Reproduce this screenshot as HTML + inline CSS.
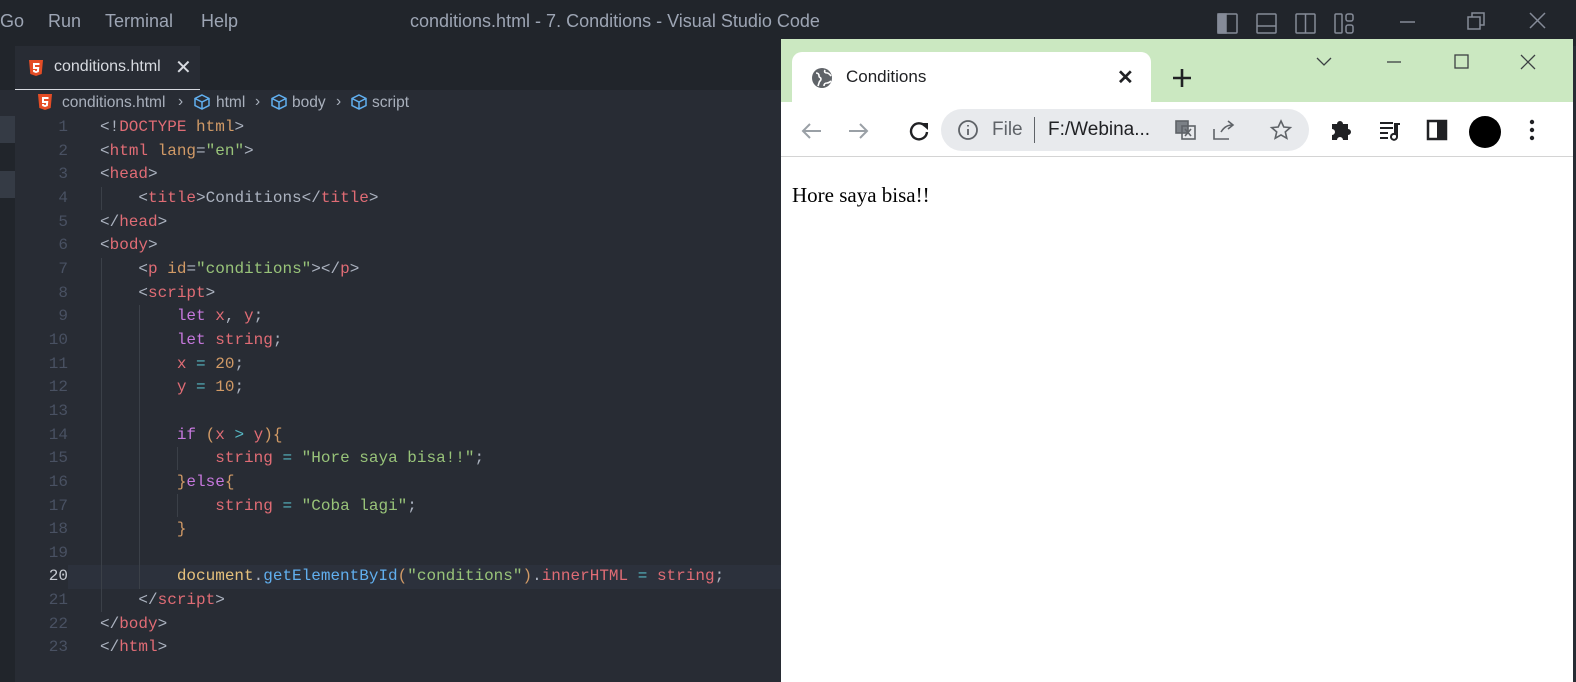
<!DOCTYPE html>
<html style="width:1576px;height:682px;overflow:hidden"><head><style>
*{margin:0;padding:0;box-sizing:border-box}
body{width:1576px;height:682px;background:#282c34;position:relative;overflow:hidden;font-family:"Liberation Sans",sans-serif}
.abs{position:absolute}
#title{left:0;top:0;width:1576px;height:46px;background:#21252b;color:#9da5b4;font-size:18px}
#title span{position:absolute;top:11px}
#tabs{left:0;top:46px;width:782px;height:44px;background:#21252b}
#tab{left:15px;top:46px;width:185px;height:44px;background:#282c34;border-bottom:1px solid #d7dae0;color:#d7dae0;font-size:16px}
#code{left:0;top:116px;width:782px;height:560px;font-family:"Liberation Mono",monospace;font-size:16px;line-height:23.65px;color:#abb2bf}
.pre{white-space:pre}
.ln{position:absolute;left:20px;top:0;width:48px;text-align:right;color:#495162}
.t{color:#e06c75}.a{color:#d19a66}.s{color:#98c379}.k{color:#c678dd}.f{color:#61afef}.y{color:#e5c07b}.p{color:#abb2bf}.c{color:#56b6c2}
.g{position:absolute;width:1px;background:#3b4048}
</style></head><body>
<div id="title" class="abs">
<span style="left:0">Go</span><span style="left:48px">Run</span><span style="left:105px">Terminal</span><span style="left:201px">Help</span>
<span style="left:410px">conditions.html - 7. Conditions - Visual Studio Code</span>
<svg class="abs" style="left:1210px;top:8px" width="366" height="30" fill="none" stroke="#858b98" stroke-width="1.5">
<rect x="8" y="6" width="19" height="19" rx="1"/><rect x="8" y="6" width="8" height="19" fill="#858b98"/>
<rect x="47" y="6" width="19" height="19" rx="1"/><line x1="47" y1="18" x2="66" y2="18"/>
<rect x="86" y="6" width="19" height="19" rx="1"/><line x1="95.5" y1="6" x2="95.5" y2="25"/>
<rect x="125" y="6" width="7" height="19" rx="1"/><rect x="136" y="6" width="7" height="7" rx="2"/><rect x="136" y="17" width="7" height="8" rx="2"/>
<line x1="190" y1="14" x2="205" y2="14"/>
<rect x="258" y="9" width="12" height="12"/><path d="M262 9V5h12v12h-4"/>
<path d="M320 5l15 15M335 5l-15 15"/>
</svg>
</div>
<div id="tabs" class="abs"></div>
<div id="tab" class="abs">
<svg class="abs" style="left:14px;top:14px" width="14" height="16"><path d="M0 0h14l-1.3 14L7 16 1.3 14z" fill="#e44d26"/><path d="M4 3h6.5v2H6v2h4.3l-.5 5L7 13l-2.8-1-.2-2h2l.1.8L7 11l1-.3.1-1.7H4z" fill="#fff"/></svg>
<span class="abs" style="left:39px;top:12px">conditions.html</span>
<span class="abs" style="left:160px;top:9px;font-size:20px">✕</span>
</div>
<div class="abs" style="left:0;top:90px;width:782px;height:26px;color:#a9b0bc;font-size:15.5px">
<svg class="abs" style="left:38px;top:4px" width="14" height="16"><path d="M0 0h14l-1.3 14L7 16 1.3 14z" fill="#e44d26"/><path d="M4 3h6.5v2H6v2h4.3l-.5 5L7 13l-2.8-1-.2-2h2l.1.8L7 11l1-.3.1-1.7H4z" fill="#fff"/></svg>
<span class="abs" style="left:62px;top:4px">conditions.html</span>
<span class="abs" style="left:178px;top:3px">›</span>
<svg class="abs" style="left:193px;top:4px" width="18" height="16" fill="none" stroke="#61afef" stroke-width="1.5"><path d="M9 1l7 3.5v7L9 15 2 11.5v-7zM2 4.5L9 8l7-3.5M9 8v7"/></svg>
<span class="abs" style="left:216px;top:4px">html</span>
<span class="abs" style="left:255px;top:3px">›</span>
<svg class="abs" style="left:270px;top:4px" width="18" height="16" fill="none" stroke="#61afef" stroke-width="1.5"><path d="M9 1l7 3.5v7L9 15 2 11.5v-7zM2 4.5L9 8l7-3.5M9 8v7"/></svg>
<span class="abs" style="left:292px;top:4px">body</span>
<span class="abs" style="left:336px;top:3px">›</span>
<svg class="abs" style="left:350px;top:4px" width="18" height="16" fill="none" stroke="#61afef" stroke-width="1.5"><path d="M9 1l7 3.5v7L9 15 2 11.5v-7zM2 4.5L9 8l7-3.5M9 8v7"/></svg>
<span class="abs" style="left:372px;top:4px">script</span>
</div>
<div class="abs" style="left:0;top:116px;width:15px;height:566px;background:#21252b"></div>
<div class="abs" style="left:0;top:116px;width:15px;height:27px;background:#353b45"></div>
<div class="abs" style="left:0;top:171px;width:15px;height:27px;background:#353b45"></div>
<div class="abs" style="left:68px;top:565px;width:714px;height:24px;background:#2c313c"></div>
<div class="g" style="left:101px;top:187px;height:23px"></div>
<div class="g" style="left:101px;top:258px;height:354px"></div>
<div class="g" style="left:139px;top:305px;height:284px"></div>
<div class="g" style="left:177px;top:447px;height:23px"></div>
<div class="g" style="left:177px;top:494px;height:23px"></div>
<div id="code" class="abs"><div class="ln pre">1
2
3
4
5
6
7
8
9
10
11
12
13
14
15
16
17
18
19
<span style="color:#c5c9d0">20</span>
21
22
23</div><div class="pre" style="position:absolute;left:100px;top:0">&lt;!<span class="t">DOCTYPE</span> <span class="a">html</span>&gt;
&lt;<span class="t">html</span> <span class="a">lang</span>=<span class="s">"en"</span>&gt;
&lt;<span class="t">head</span>&gt;
    &lt;<span class="t">title</span>&gt;Conditions&lt;/<span class="t">title</span>&gt;
&lt;/<span class="t">head</span>&gt;
&lt;<span class="t">body</span>&gt;
    &lt;<span class="t">p</span> <span class="a">id</span>=<span class="s">"conditions"</span>&gt;&lt;/<span class="t">p</span>&gt;
    &lt;<span class="t">script</span>&gt;
        <span class="k">let</span> <span class="t">x</span>, <span class="t">y</span>;
        <span class="k">let</span> <span class="t">string</span>;
        <span class="t">x</span> <span class="c">=</span> <span class="a">20</span>;
        <span class="t">y</span> <span class="c">=</span> <span class="a">10</span>;

        <span class="k">if</span> <span class="a">(</span><span class="t">x</span> <span class="c">&gt;</span> <span class="t">y</span><span class="a">){</span>
            <span class="t">string</span> <span class="c">=</span> <span class="s">"Hore saya bisa!!"</span>;
        <span class="a">}</span><span class="k">else</span><span class="a">{</span>
            <span class="t">string</span> <span class="c">=</span> <span class="s">"Coba lagi"</span>;
        <span class="a">}</span>

        <span class="y">document</span>.<span class="f">getElementById</span><span class="a">(</span><span class="s">"conditions"</span><span class="a">)</span>.<span class="t">innerHTML</span> <span class="c">=</span> <span class="t">string</span>;
    &lt;/<span class="t">script</span>&gt;
&lt;/<span class="t">body</span>&gt;
&lt;/<span class="t">html</span>&gt;</div></div>

<!-- browser -->
<div class="abs" style="left:781px;top:39px;width:792px;height:643px;background:#fff">
<div class="abs" style="left:0;top:0;width:792px;height:63px;background:#cbe8c1"></div>
<div class="abs" style="left:11px;top:13px;width:359px;height:50px;background:#fff;border-radius:10px 10px 0 0"></div>
<svg class="abs" style="left:30px;top:28px" width="22" height="22"><circle cx="11" cy="11" r="10" fill="#5f6368"/><path d="M5 6c2 0 3 1 3 3s2 1 2 3-2 2-2 4l-1 3M14 3c-1 2 0 3 2 3s3 2 4 3M13 19c0-2 1-3 3-3s3-1 4-2" stroke="#fff" stroke-width="1.6" fill="none"/></svg>
<span class="abs" style="left:65px;top:28px;font-size:17px;color:#202124">Conditions</span>
<span class="abs" style="left:336px;top:26px;font-size:20px;color:#202124;font-weight:bold">✕</span>
<svg class="abs" style="left:391px;top:29px" width="20" height="20" stroke="#202124" stroke-width="2.6"><path d="M10 1v18M1 10h18"/></svg>
<svg class="abs" style="left:530px;top:14px" width="260" height="20" fill="none" stroke="#3c4043" stroke-width="1.3"><path d="M6 5l7 7 7-7"/><path d="M76 9h14"/><rect x="144" y="2" width="13" height="13"/><path d="M210 2l14 14M224 2l-14 14"/></svg>
<div class="abs" style="left:0;top:117px;width:792px;height:1px;background:#d4d4d4"></div>
<svg class="abs" style="left:18px;top:80px" width="145" height="24" fill="none" stroke-width="2"><path d="M22 12H4m7-7l-7 7 7 7" stroke="#9aa0a6"/><path d="M50 12h18m-7-7l7 7-7 7" stroke="#9aa0a6"/><path d="M126 7a8 8 0 1 0 2 6" stroke="#202124" stroke-width="2.4"/><path d="M121 4h8v7z" fill="#202124"/></svg>
<div class="abs" style="left:160px;top:70px;width:368px;height:42px;background:#e8eaed;border-radius:21px"></div>
<svg class="abs" style="left:176px;top:80px" width="22" height="22" fill="none" stroke="#5f6368" stroke-width="1.8"><circle cx="11" cy="11" r="9"/><path d="M11 10v6M11 6v1.5"/></svg>
<span class="abs" style="left:211px;top:80px;font-size:19px;color:#5f6368">File</span>
<div class="abs" style="left:253px;top:78px;width:1px;height:26px;background:#5f6368"></div>
<span class="abs" style="left:267px;top:80px;font-size:19px;color:#202124">F:/Webina...</span>
<svg class="abs" style="left:393px;top:78px" width="130" height="28" fill="none" stroke="#5f6368" stroke-width="1.6"><rect x="2" y="4" width="12" height="12" fill="#7b8086"/><rect x="8" y="9" width="13" height="13"/><path d="M11 12l6 7M17 12l-6 7"/><path d="M40 12v10h15M47 15c3-5 7-7 11-7M54 4l5 4-5 4" /><path d="M107 4l2.8 6 6.5.6-5 4.3 1.5 6.4-5.8-3.4-5.8 3.4 1.5-6.4-5-4.3 6.5-.6z"/></svg>
<svg class="abs" style="left:548px;top:76px" width="220" height="34"><path d="M3 9h5a3 3 0 0 1 6 0h5v5a3 3 0 0 1 0 6v5h-5a3 3 0 0 0-6 0H3v-5a3 3 0 0 0 0-6z" fill="#202124"/><path d="M51 8h13M51 13h13M51 18h8M51 23h8" stroke="#202124" stroke-width="2"/><path d="M68 9v13a3 3 0 1 1-2-3V9h5" stroke="#202124" stroke-width="2" fill="none"/><rect x="99" y="6" width="18" height="18" fill="none" stroke="#202124" stroke-width="2.5"/><rect x="108" y="6" width="9" height="18" fill="#202124"/><circle cx="156" cy="17" r="16" fill="#000"/><circle cx="203" cy="7" r="2.2" fill="#202124"/><circle cx="203" cy="15" r="2.2" fill="#202124"/><circle cx="203" cy="23" r="2.2" fill="#202124"/></svg>
<span class="abs" style="left:11px;top:144px;font-family:'Liberation Serif',serif;font-size:21px;color:#000">Hore saya bisa!!</span>
</div>
</body></html>
